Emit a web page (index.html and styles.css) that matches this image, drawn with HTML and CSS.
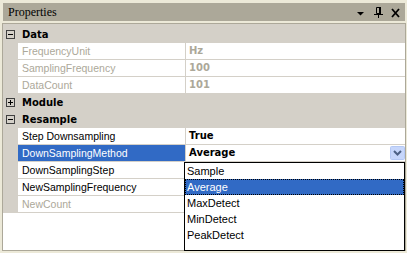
FILE: index.html
```html
<!DOCTYPE html>
<html lang="en">
<head>
  <meta charset="UTF-8" />
  <title>Properties</title>
  <link rel="stylesheet" href="styles.css">
</head>
<body>
  <div class="panel">
    <div class="titlebar">
      <span>Properties</span>
      <svg class="tools" width="48" height="18" viewBox="0 0 48 18">
        <polygon points="2,9 9,9 5.5,12.5" fill="#000"/>
        <path d="M21.5 4.5h4v6h-4z" fill="none" stroke="#000"/>
        <rect x="24" y="4" width="2" height="7" fill="#000"/>
        <rect x="19" y="11" width="9" height="1" fill="#000"/>
        <rect x="23" y="12" width="1" height="3" fill="#000"/>
        <path d="M37 6l7 8M44 6l-7 8" stroke="#000" stroke-width="1.8"/>
      </svg>
    </div>

    <div class="grid">
      <div class="cat first"><span class="toggle minus"></span>Data</div>
      <div class="row off"><div class="gutter"></div><div class="name">FrequencyUnit</div><div class="value">Hz</div></div>
      <div class="row off"><div class="gutter"></div><div class="name">SamplingFrequency</div><div class="value">100</div></div>
      <div class="row off"><div class="gutter"></div><div class="name">DataCount</div><div class="value">101</div></div>

      <div class="cat"><span class="toggle plus"></span>Module</div>

      <div class="cat"><span class="toggle minus"></span>Resample</div>
      <div class="row"><div class="gutter"></div><div class="name">Step Downsampling</div><div class="value">True</div></div>
      <div class="row selected">
        <div class="gutter"></div>
        <div class="name">DownSamplingMethod</div>
        <div class="value">
          <span>Average</span>
          <svg class="combo-btn" width="15" height="14" viewBox="0 0 15 14">
            <rect x="0.5" y="0.5" width="14" height="13" rx="1" fill="#C6D6FB" stroke="#B4C8F4"/>
            <path d="M4 5l3.5 3.5L11 5" fill="none" stroke="#4D6185" stroke-width="2"/>
          </svg>
        </div>
      </div>
      <div class="row"><div class="gutter"></div><div class="name">DownSamplingStep</div><div class="value"></div></div>
      <div class="row"><div class="gutter"></div><div class="name">NewSamplingFrequency</div><div class="value"></div></div>
      <div class="row off"><div class="gutter"></div><div class="name">NewCount</div><div class="value"></div></div>

      <div class="dropdown">
        <div class="item">Sample</div>
        <div class="item active">Average</div>
        <div class="item">MaxDetect</div>
        <div class="item">MinDetect</div>
        <div class="item">PeakDetect</div>
      </div>
    </div>
  </div>
</body>
</html>
```

FILE: styles.css
```css
body {
  margin: 0;
  background: #ECE9D8;
  font-family: "Liberation Sans", Arial, sans-serif;
  font-size: 11px;
  color: #000;
}
.panel {
  padding: 3px 1px 0 2px;
}
.titlebar {
  display: flex;
  align-items: center;
  justify-content: space-between;
  height: 18px;
  margin: 0 1px;
  padding-left: 5px;
  background: #ACA899;
  font-family: "Liberation Serif", "Times New Roman", serif;
  font-size: 12px;
}
.tools {
  margin-right: 2px;
}
.grid {
  position: relative;
  box-sizing: border-box;
  height: 228px;
  margin-top: 2px;
  border: 1px solid #ACA899;
  background: #fff;
}
.cat {
  display: flex;
  align-items: center;
  height: 17px;
  padding-left: 3px;
  background: #D4D0C8;
  font-family: "DejaVu Sans", Verdana, sans-serif;
  font-weight: bold;
  font-size: 10px;
}
.cat.first {
  padding-top: 2px;
}
.toggle {
  position: relative;
  box-sizing: border-box;
  width: 9px;
  height: 9px;
  margin-right: 7px;
  border: 1px solid #404040;
}
.toggle::before {
  content: "";
  position: absolute;
  left: 1px;
  top: 3px;
  width: 5px;
  height: 1px;
  background: #000;
}
.toggle.plus::after {
  content: "";
  position: absolute;
  left: 3px;
  top: 1px;
  width: 1px;
  height: 5px;
  background: #000;
}
.row {
  display: grid;
  grid-template-columns: 15px 168px 1fr;
  height: 17px;
}
.gutter {
  background: #D4D0C8;
}
.name, .value {
  box-sizing: border-box;
  height: 17px;
  line-height: 16px;
  border-bottom: 1px solid #D4D0C8;
  white-space: nowrap;
}
.name {
  padding-left: 4px;
  border-right: 1px solid #D4D0C8;
  font-size: 10.5px;
}
.value {
  display: flex;
  align-items: center;
  justify-content: space-between;
  padding-left: 3px;
  font-family: "DejaVu Sans", Verdana, sans-serif;
  font-weight: bold;
  font-size: 10px;
}
.row.off .name, .row.off .value {
  color: #ACA899;
}
.row.selected .name {
  background: #316AC5;
  color: #fff;
}
.combo-btn {
  display: block;
}
.dropdown {
  position: absolute;
  left: 181px;
  top: 138px;
  box-sizing: border-box;
  width: 221px;
  height: 89px;
  border: 1px solid #000;
  background: #fff;
}
.item {
  height: 16px;
  line-height: 16px;
  padding-left: 2px;
}
.item.active {
  background: #316AC5;
  color: #fff;
  outline: 1px dotted #000;
  outline-offset: -1px;
}
```
